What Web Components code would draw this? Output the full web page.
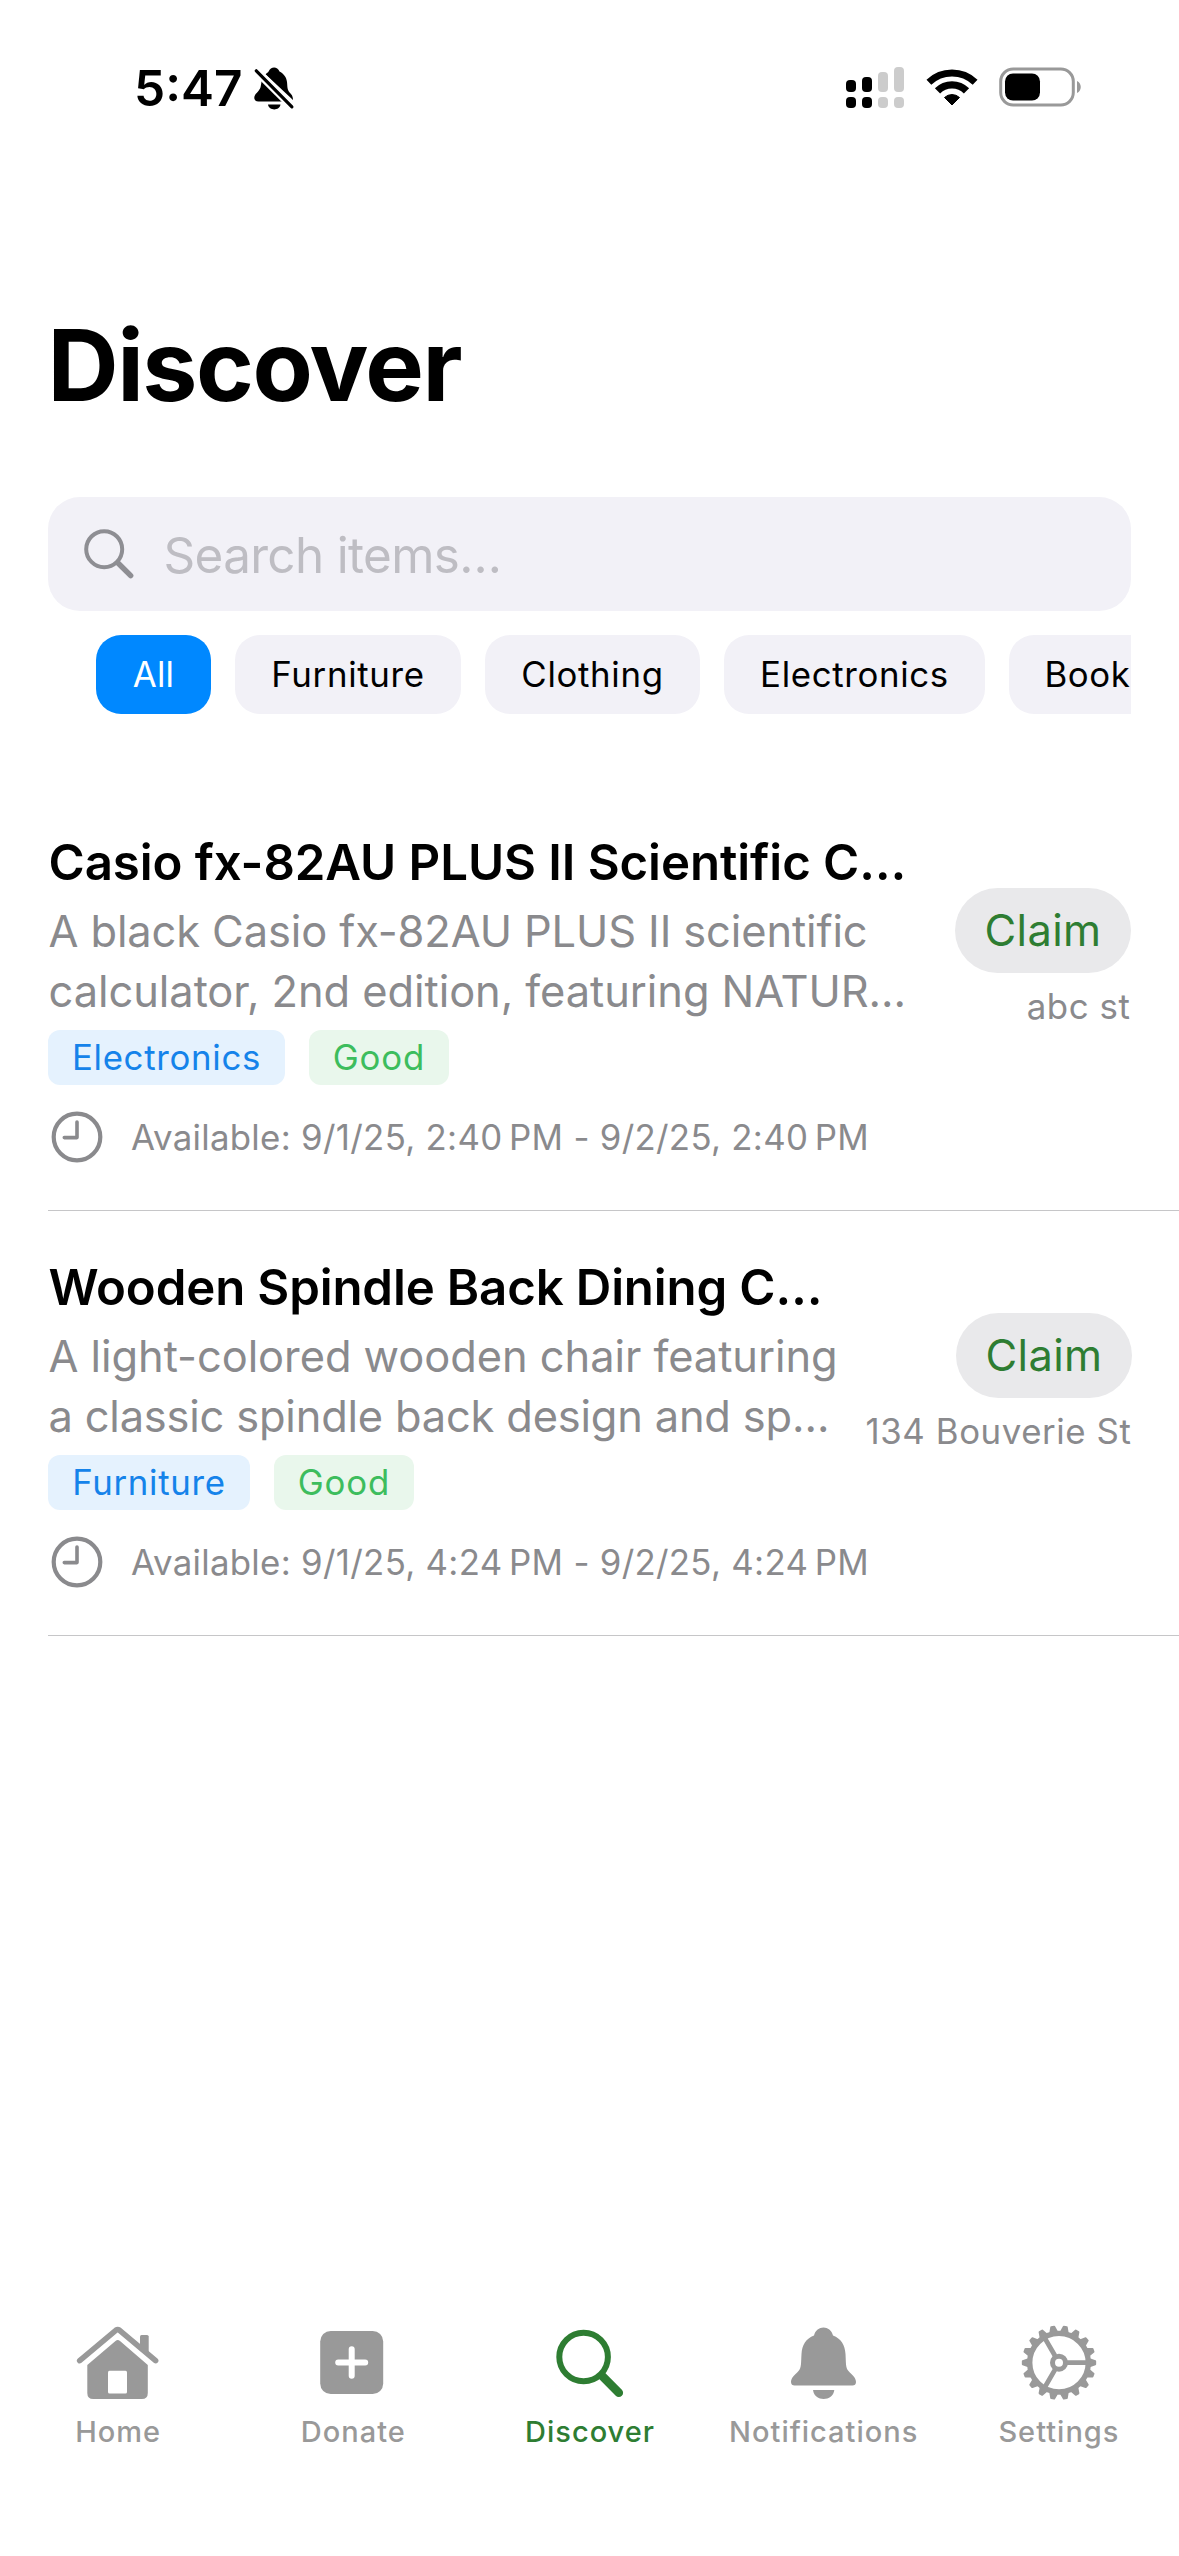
<!DOCTYPE html>
<html lang="en">
<head>
<meta charset="utf-8">
<title>Discover</title>
<style>
  html, body { margin: 0; background: #fff; }
  body { width: 1179px; height: 2556px; overflow: hidden; font-family: Inter, "Liberation Sans", sans-serif; color: #000; }
</style>
</head>
<body>
<discover-app></discover-app>
<script>
const define = (name, html, setup) => {
  const template = document.createElement('template');
  template.innerHTML = html;
  customElements.define(name, class extends HTMLElement {
    connectedCallback() {
      if (this.shadowRoot) return;
      this.attachShadow({ mode: 'open' }).append(template.content.cloneNode(true));
      if (setup) setup(this, this.shadowRoot);
    }
  });
};

const polar = (cx, cy, r, deg) => {
  const a = deg * Math.PI / 180;
  return (cx + r * Math.cos(a)).toFixed(2) + ' ' + (cy + r * Math.sin(a)).toFixed(2);
};
const teeth = Array.from({ length: 18 }, (_, i) => {
  const a = i * 20;
  return `M${polar(45, 42.7, 30, a - 7.2)}L${polar(45, 42.7, 36.2, a - 2.4)}L${polar(45, 42.7, 36.2, a + 2.4)}L${polar(45, 42.7, 30, a + 7.2)}Z`;
}).join('');

const icons = {
  silent: ['0 0 42 46', `<path fill="currentColor" d="M7.6 15.2C8.2 12.6 9 11 10.300 9.600L36.800 34.600C36 35.300 35 35.600 33.500 35.600L4.500 35.600C0.500 35.600-.8 32 1.200 28.800C3 26.200 6.200 24 6.800 20Z"/>
    <path fill="currentColor" d="M11.500 8.300C12.800 7 14 6.500 14.600 5.500C16.800.3 23.400.3 25.500 5.500C29.500 7.500 32.500 11 33 16C33.500 20 33 24 36 27C37.500 28.500 39 30 39 34Z"/>
    <path fill="currentColor" d="M14 38.500H26.500C25.500 45 15 45 14 38.500Z"/>
    <path stroke="#fff" stroke-width="8" d="M2 4.500L37.500 40"/><path stroke="currentColor" stroke-width="3.200" stroke-linecap="round" d="M2.300 4.800L37.900 40.800"/>`],
  signal: ['0 0 60 42', `<g><rect x="1" y="14" width="10" height="12" rx="4"/><rect x="17" y="11" width="10" height="15" rx="4"/><g fill="#ccc"><rect x="33" y="6" width="10" height="20" rx="4"/><rect x="49" y="1" width="10" height="25" rx="4"/><rect x="33" y="31" width="10" height="11" rx="4"/><rect x="49" y="31" width="10" height="11" rx="4"/></g><rect x="1" y="31" width="10" height="11" rx="4"/><rect x="17" y="31" width="10" height="11" rx="4"/></g>`],
  wifi: ['0 0 52 38', `<g fill="none" stroke="#000"><path stroke-width="7" d="M2.900 14.200A33.500 33.500 0 0 1 49.100 14.200"/><path stroke-width="7.400" d="M11.500 22.900A20.500 20.500 0 0 1 40.500 22.900"/></g><path stroke="#000" stroke-width="1" stroke-linejoin="round" d="M26 37L18.500 29.500A11 11 0 0 1 33.500 29.500Z"/>`],
  battery: ['0 0 84 40', `<rect x="1.700" y="3" width="72.600" height="36" rx="12.500" fill="none" stroke="#999" stroke-width="3"/><rect x="6" y="7.500" width="35" height="27" rx="8"/><path fill="#999" d="M78 15C83 17 83 25 78 27Z"/>`],
  search: ['0 0 50 50', `<circle cx="20.200" cy="20.200" r="18" fill="none" stroke="currentColor" stroke-width="4"/><path stroke="currentColor" stroke-width="5.400" stroke-linecap="round" d="M34 34L46.700 46.700"/>`],
  clock: ['0 0 52 52', `<g fill="none" stroke="currentColor"><circle cx="26" cy="26" r="23.300" stroke-width="4.200"/><path stroke-width="3.600" stroke-linecap="round" stroke-linejoin="round" d="M26 11V26.600H13.300"/></g>`],
  home: ['0 0 90 90', `<g fill="currentColor"><path d="M67 28V16.500Q67 15 68.500 15H74Q75.700 15 75.700 16.500V34Z"/><path d="M14.300 45L42.500 21Q44.700 19 47 21L74.800 45V73Q74.800 79 68.800 79H20.300Q14.300 79 14.300 73Z"/></g><rect x="35" y="50.700" width="19" height="22.700" rx="1.500" fill="#fff"/><path fill="none" stroke="currentColor" stroke-width="5.600" stroke-linecap="round" stroke-linejoin="round" d="M6.700 40.600L43.100 10.100Q44.700 8.900 46.300 10.100L82.600 40.600"/>`],
  donate: ['0 0 90 90', `<rect x="12.200" y="11" width="63" height="63" rx="10.500" fill="currentColor"/><path stroke="#fff" stroke-width="6" stroke-linecap="round" d="M43.700 29.300V55.700M30.200 42.500H57.200"/>`],
  discover: ['0 0 90 90', `<circle cx="39.600" cy="37" r="24.300" fill="none" stroke="currentColor" stroke-width="6"/><path stroke="currentColor" stroke-width="8.600" stroke-linecap="round" d="M58.200 56L74.800 72.800"/>`],
  bell: ['0 0 90 90', `<path fill="currentColor" d="M35 15.500C37.500 4.800 51.500 4.800 54 15.500C62 18.500 66 25 66.500 34C67 42 66.500 48 69.500 51C73 55 77 57.500 77 62C77 64.500 75.500 65.500 73.500 65.500H15.500C13.500 65.500 12 64.500 12 62C12 57.500 16 55 19.500 51C22.500 48 22 42 22.500 34C23 25 27 18.500 35 15.500Z"/><path fill="currentColor" d="M34 70H55.300C54 82 35.300 82 34 70Z"/>`],
  settings: ['0 0 90 90', `<path fill="currentColor" stroke="currentColor" stroke-width="2" stroke-linejoin="round" d="${teeth}"/><g fill="none" stroke="currentColor"><circle cx="45" cy="42.700" r="29.300" stroke-width="5.400"/><circle cx="45" cy="42.700" r="6.500" stroke-width="5"/><path stroke-width="4.800" d="M${polar(45, 42.7, 8, 0)}L${polar(45, 42.7, 29, 0)}M${polar(45, 42.7, 8, 120)}L${polar(45, 42.7, 29, 120)}M${polar(45, 42.7, 8, 240)}L${polar(45, 42.7, 29, 240)}"/></g>`]
};

define('ui-icon', `<style>:host{display:block;flex:none;line-height:0}svg{display:block;overflow:visible}</style>`, (host, root) => {
  const [box, body] = icons[host.getAttribute('name')];
  const [, , w, h] = box.split(' ');
  root.innerHTML += `<svg width="${w}" height="${h}" viewBox="${box}" aria-hidden="true">${body}</svg>`;
});

define('status-bar', `<style>
  :host{display:flex;justify-content:space-between;box-sizing:border-box;height:304px;padding:58px 96.500px 0 134px}
  .left,.right{display:flex;align-items:flex-start}
  time{font-size:49.5px;font-weight:600;line-height:60px;width:120px}
  .left ui-icon{margin-top:8px}
  .right{padding-top:8px}
  .right ui-icon:nth-child(2){margin:2px 21px 0 21px}
</style>
<div class="left"><time>5:47</time><ui-icon name="silent"></ui-icon></div>
<div class="right"><ui-icon name="signal"></ui-icon><ui-icon name="wifi"></ui-icon><ui-icon name="battery"></ui-icon></div>`);

define('page-title', `<style>
  :host{display:block;padding-left:47.500px;height:193px}
  h1{margin:0;padding-top:2px;font-size:98.500px;font-weight:700;line-height:120px;letter-spacing:-1.500px}
</style><h1><slot></slot></h1>`);

define('search-field', `<style>
  :host{display:flex;align-items:center;gap:30px;box-sizing:border-box;height:114px;margin:0 48px;padding-left:35.500px;border-radius:32px;background:#f2f1f7;color:#8e8e93}
  span{font-size:49.400px;line-height:60px;letter-spacing:-.65px;color:#bebdc3;padding-top:1px}
</style><ui-icon name="search"></ui-icon><span><slot></slot></span>`);

define('filter-chip', `<style>
  :host{display:flex;flex:none;align-items:center;justify-content:center;box-sizing:border-box;height:79px;width:var(--w);padding-bottom:2px;border-radius:25px;background:#f2f1f7;font-size:34.800px;letter-spacing:.66px;line-height:44px;white-space:nowrap}
  :host([selected]){background:#08f;color:#fff;letter-spacing:.2px}
</style><slot></slot>`);

define('filter-row', `<style>
  :host{display:flex;gap:24px;margin:24px 48px 0;padding-left:48px;overflow:hidden;height:79px}
</style><slot></slot>`);

define('item-tag', `<style>
  :host{display:flex;flex:none;align-items:center;justify-content:center;box-sizing:border-box;height:55px;width:var(--w);padding-bottom:1px;border-radius:12px;background:#e5f2fe;color:#1583ea;font-size:34.800px;letter-spacing:.7px;line-height:44px}
  :host([tone=good]){background:#e9f7ec;color:#3dbd5d;letter-spacing:.9px}
</style><slot></slot>`);

define('claim-button', `<style>
  :host{display:flex;align-items:center;justify-content:center;box-sizing:border-box;height:85px;width:176px;padding-bottom:1px;border-radius:43px;background:#e9e9eb;color:#2e7d32;font-size:43.400px;letter-spacing:.36px;line-height:56px}
</style><slot></slot>`);

define('item-card', `<style>
  :host{display:flex;box-sizing:border-box;height:425px;margin-left:48px;padding:46px var(--edge,48px) 47px 0;border-bottom:1px solid #c6c6c8;white-space:nowrap}
  .info{display:flex;flex:1;min-width:0;flex-direction:column}
  h2{margin:0 0 9px;padding-left:.5px;font-size:49.200px;font-weight:600;line-height:60px;letter-spacing:var(--title-ls)}
  .text{font-size:43.400px;line-height:60px;color:#8a8a8d;padding-left:.5px;margin-bottom:9px}
  .tags{display:flex;gap:24px}
  .when{display:flex;align-items:center;gap:28px;margin-top:26.500px;height:51px;padding-left:3px;font-size:34.800px;letter-spacing:.3px;line-height:44px;color:#8a8a8d}
  .side{display:flex;flex:none;flex-direction:column;align-items:flex-end;padding-top:56px}
  .place{margin-top:12px;padding-right:.5px;font-size:34.800px;line-height:43px;letter-spacing:.59px;color:#8a8a8d}
</style>
<div class="info"><h2><slot name="title"></slot></h2><div class="text"><slot name="text"></slot></div>
<div class="tags"><slot name="tags"></slot></div>
<div class="when"><ui-icon name="clock"></ui-icon><slot name="when"></slot></div></div>
<div class="side"><claim-button>Claim</claim-button><div class="place"><slot name="place"></slot></div></div>`);

define('text-line', `<style>:host{display:block;letter-spacing:var(--ls)}</style><slot></slot>`);

define('tab-item', `<style>
  :host{display:flex;flex:1;flex-direction:column;align-items:center;color:#999;font-size:29px;font-weight:500;line-height:36px;letter-spacing:1px}
  :host([active]){color:#2e7d32}
  .icon{height:93.500px}
  .label{padding-left:var(--nudge,0px)}
</style><div class="icon"></div><span class="label"><slot></slot></span>`, (host, root) => {
  const icon = document.createElement('ui-icon');
  icon.setAttribute('name', host.getAttribute('icon'));
  root.querySelector('.icon').append(icon);
});

define('tab-bar', `<style>:host{display:flex;margin-top:auto;padding:0 2.500px 106.500px .5px}</style><slot></slot>`);

define('discover-app', `<style>
  :host{display:flex;flex-direction:column;width:1179px;height:2556px;background:#fff}
  .list{margin-top:72px}
</style>
<status-bar></status-bar>
<page-title>Discover</page-title>
<search-field>Search items…</search-field>
<filter-row>
  <filter-chip selected style="--w:115px">All</filter-chip>
  <filter-chip style="--w:226px">Furniture</filter-chip>
  <filter-chip style="--w:215px">Clothing</filter-chip>
  <filter-chip style="--w:261px">Electronics</filter-chip>
  <filter-chip style="--w:157px">Book</filter-chip>
</filter-row>
<div class="list">
  <item-card style="--title-ls:-.08px">
    <span slot="title">Casio fx-82AU PLUS II Scientific C…</span>
    <text-line slot="text" style="--ls:-.1px">A black Casio fx-82AU PLUS II scientific</text-line>
    <text-line slot="text" style="--ls:-.04px">calculator, 2nd edition, featuring NATUR…</text-line>
    <item-tag slot="tags" style="--w:237px">Electronics</item-tag>
    <item-tag slot="tags" tone="good" style="--w:140px">Good</item-tag>
    <span slot="when">Available: 9/1/25, 2:40&#8239;PM - 9/2/25, 2:40&#8239;PM</span>
    <span slot="place">abc st</span>
  </item-card>
  <item-card style="--title-ls:-.15px;--edge:47px">
    <span slot="title">Wooden Spindle Back Dining C…</span>
    <text-line slot="text" style="--ls:-.04px">A light-colored wooden chair featuring</text-line>
    <text-line slot="text" style="--ls:-.18px">a classic spindle back design and sp…</text-line>
    <item-tag slot="tags" style="--w:202px">Furniture</item-tag>
    <item-tag slot="tags" tone="good" style="--w:140px">Good</item-tag>
    <span slot="when">Available: 9/1/25, 4:24&#8239;PM - 9/2/25, 4:24&#8239;PM</span>
    <span slot="place">134 Bouverie St</span>
  </item-card>
</div>
<tab-bar>
  <tab-item icon="home">Home</tab-item>
  <tab-item icon="donate">Donate</tab-item>
  <tab-item icon="discover" active style="--nudge:3px">Discover</tab-item>
  <tab-item icon="bell">Notifications</tab-item>
  <tab-item icon="settings">Settings</tab-item>
</tab-bar>`);
</script>
</body>
</html>
